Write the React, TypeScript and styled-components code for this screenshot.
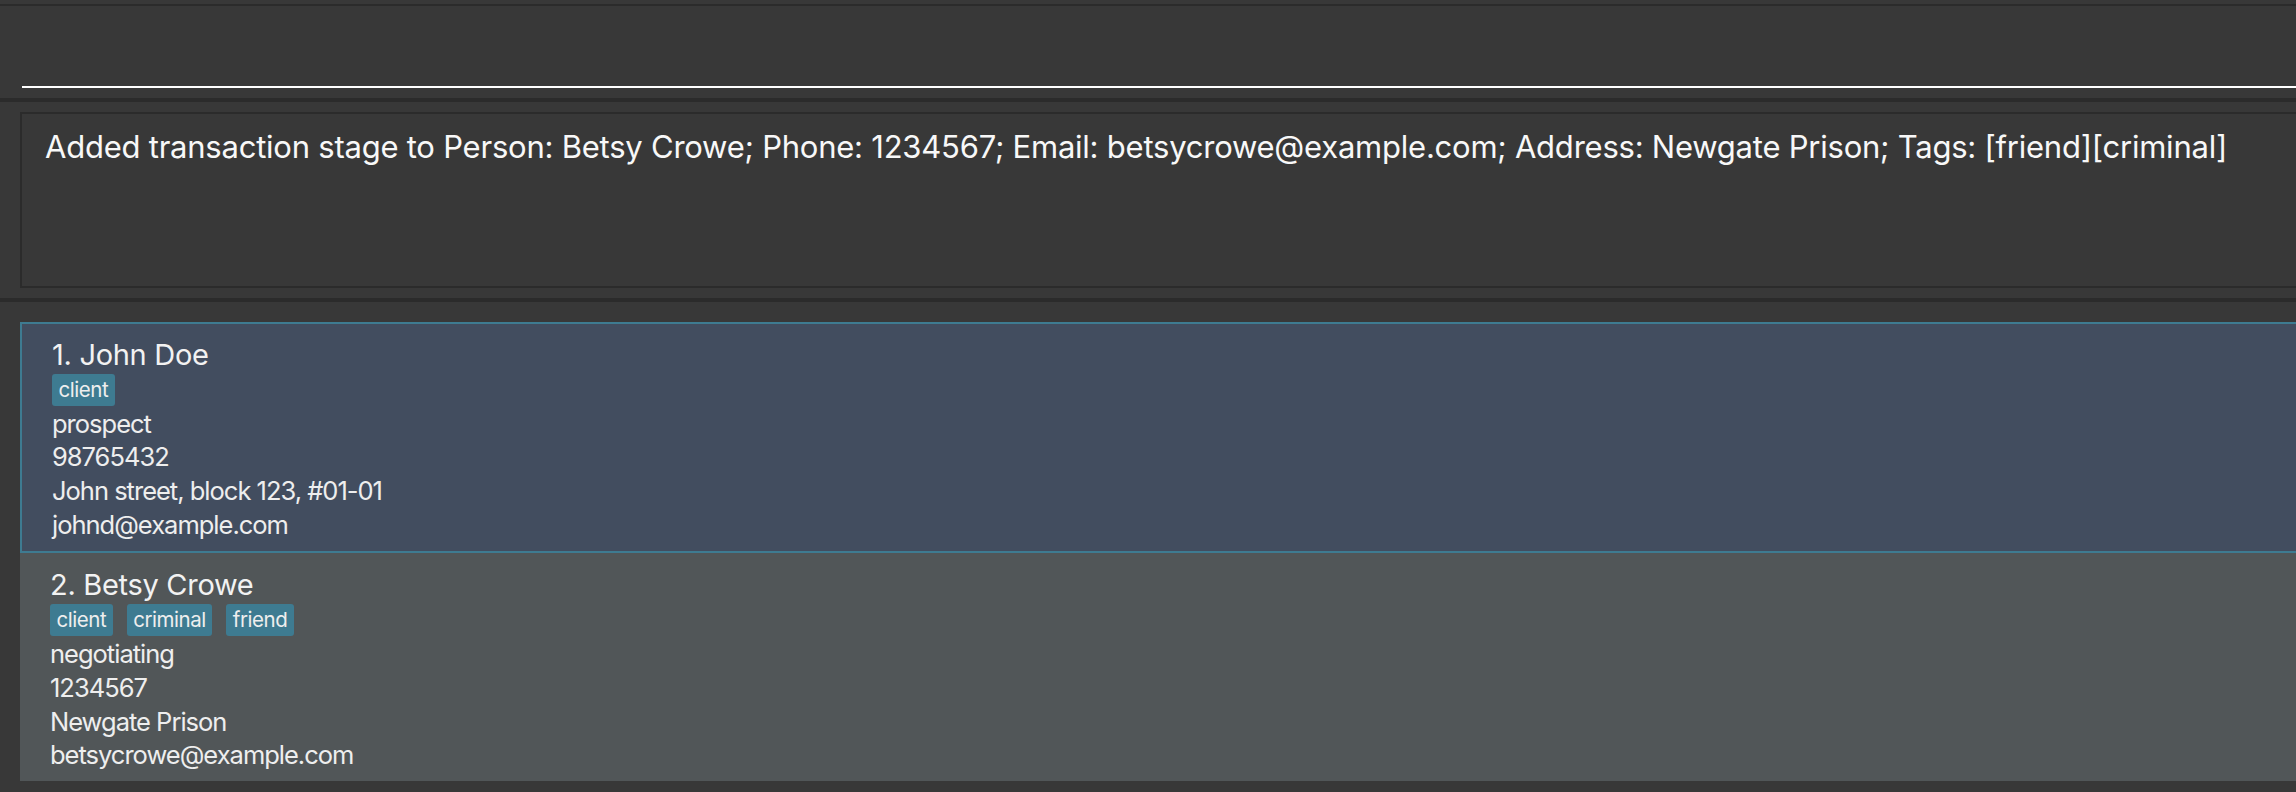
import React from "react";
import styled, { createGlobalStyle } from "styled-components";

const Global = createGlobalStyle`
  html, body { margin: 0; padding: 0; background: #383838; }
  body { font-family: Inter, "Noto Sans", sans-serif; color: #ffffff; overflow: hidden; }
  * { box-sizing: border-box; }
`;

const Window = styled.div`
  width: 2296px;
  height: 792px;
  display: flex;
  flex-direction: column;
  background: #383838;
  overflow: hidden;
`;

const MenuStrip = styled.div`
  height: 4px;
  background: #383838;
  flex: none;
`;

const Divider = styled.div<{ $h: number }>`
  height: ${(p) => p.$h}px;
  background: #2b2b2b;
  flex: none;
`;

const CommandPane = styled.div`
  height: 92px;
  flex: none;
  padding: 0 0 10px 22px;
  display: flex;
`;

const CommandField = styled.input`
  flex: 1;
  height: 82px;
  background: transparent;
  border: none;
  border-bottom: 2px solid #ffffff;
  outline: none;
  color: #ffffff;
  font-family: inherit;
  font-size: 31px;
  padding: 0 20px;
`;

const ResultPane = styled.div`
  height: 196px;
  flex: none;
  padding: 10px 0 10px 20px;
  display: flex;
`;

const ResultBox = styled.div`
  flex: 1;
  border: 2px solid #2b2b2b;
  border-right: none;
  padding: 14px 0 0 23px;
  font-size: 31px;
  line-height: 38px;
  letter-spacing: -0.23px;
  color: #f8f8f8;
  white-space: nowrap;
  overflow: hidden;
`;

const ListPane = styled.div`
  flex: 1;
  padding: 20px 0 0 20px;
  display: flex;
  flex-direction: column;
  overflow: hidden;
`;

const Card = styled.div<{ $selected?: boolean }>`
  flex: none;
  background: ${(p) => (p.$selected ? "#424d5f" : "#515658")};
  border: ${(p) => (p.$selected ? "2px solid #3e7b91" : "none")};
  border-right: none;
  padding: ${(p) => (p.$selected ? "13.5px 0 9.4px 30px" : "15.5px 0 9.4px 30px")};
  display: flex;
  flex-direction: column;
`;

const Name = styled.div`
  font-size: 29px;
  line-height: 34px;
  letter-spacing: -0.3px;
  color: #f2f2f2;
`;

const Tags = styled.div`
  display: flex;
  gap: 14px;
  margin: 2px 0 1px;
`;

const Tag = styled.span`
  background: #3e7b91;
  border-radius: 3px;
  height: 32px;
  padding: 0 6.5px;
  font-size: 20.5px;
  line-height: 32px;
  letter-spacing: -0.45px;
  color: #eeeeee;
`;

const Detail = styled.div`
  font-size: 25.5px;
  line-height: 33.7px;
  letter-spacing: -1px;
  color: #eeeeee;
`;

type Person = {
  name: string;
  tags: string[];
  stage: string;
  phone: string;
  address: string;
  email: string;
};

const people: Person[] = [
  {
    name: "John Doe",
    tags: ["client"],
    stage: "prospect",
    phone: "98765432",
    address: "John street, block 123, #01-01",
    email: "johnd@example.com",
  },
  {
    name: "Betsy Crowe",
    tags: ["client", "criminal", "friend"],
    stage: "negotiating",
    phone: "1234567",
    address: "Newgate Prison",
    email: "betsycrowe@example.com",
  },
];

export default function App() {
  return (
    <Window>
      <Global />
      <MenuStrip />
      <Divider $h={2} />
      <CommandPane>
        <CommandField defaultValue="" />
      </CommandPane>
      <Divider $h={4} />
      <ResultPane>
        <ResultBox>
          Added transaction stage to Person: Betsy Crowe; Phone: 1234567; Email: betsycrowe@example.com; Address: Newgate Prison; Tags: [friend][criminal]
        </ResultBox>
      </ResultPane>
      <Divider $h={4} />
      <ListPane>
        {people.map((p, i) => (
          <Card key={p.name} $selected={i === 0}>
            <Name>
              {i + 1}. {p.name}
            </Name>
            <Tags>
              {p.tags.map((t) => (
                <Tag key={t}>{t}</Tag>
              ))}
            </Tags>
            <Detail>{p.stage}</Detail>
            <Detail>{p.phone}</Detail>
            <Detail>{p.address}</Detail>
            <Detail>{p.email}</Detail>
          </Card>
        ))}
      </ListPane>
    </Window>
  );
}
